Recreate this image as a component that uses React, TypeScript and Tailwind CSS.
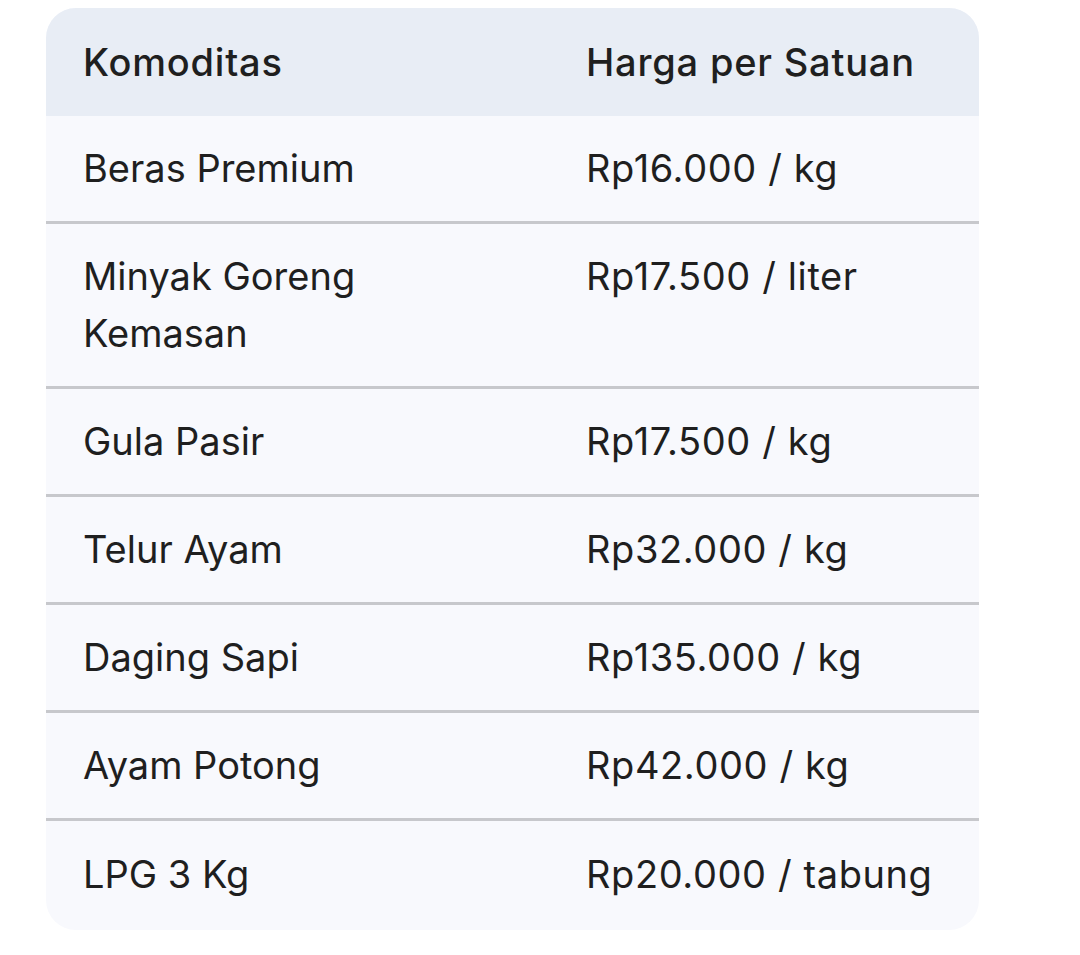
const ROWS = [
  { name: "Beras Premium", price: "Rp16.000 / kg" },
  { name: "Minyak Goreng Kemasan", price: "Rp17.500 / liter" },
  { name: "Gula Pasir", price: "Rp17.500 / kg" },
  { name: "Telur Ayam", price: "Rp32.000 / kg" },
  { name: "Daging Sapi", price: "Rp135.000 / kg" },
  { name: "Ayam Potong", price: "Rp42.000 / kg" },
  { name: "LPG 3 Kg", price: "Rp20.000 / tabung" },
]

export default function App() {
  return (
    <div className="min-h-[955px] w-[1080px] bg-white pt-[8px] pl-[46px] font-['Inter',sans-serif] text-[#1f1f1f]">
      <div className="w-[933px] overflow-hidden rounded-[30px] bg-[#f8f9fd]">
        <div className="grid grid-cols-[503px_430px] bg-[#e8edf5] text-[38px] font-medium leading-[57px] tracking-[0.8px]">
          <div className="pt-[26px] pb-[25px] pl-[37px]">Komoditas</div>
          <div className="pt-[26px] pb-[25px] pl-[37px]">Harga per Satuan</div>
        </div>
        {ROWS.map((row, i) => (
          <div
            key={row.name}
            className={`grid grid-cols-[503px_430px] text-[38px] leading-[57px] ${i < ROWS.length - 1 ? "border-b-[3px] border-[#c7c8cc] py-[24px]" : "pt-[25px] pb-[27px]"}`}
          >
            <div className="pl-[37px] pr-[110px]">{row.name}</div>
            <div className="pl-[37px] tracking-[0.6px]">{row.price}</div>
          </div>
        ))}
      </div>
    </div>
  )
}
